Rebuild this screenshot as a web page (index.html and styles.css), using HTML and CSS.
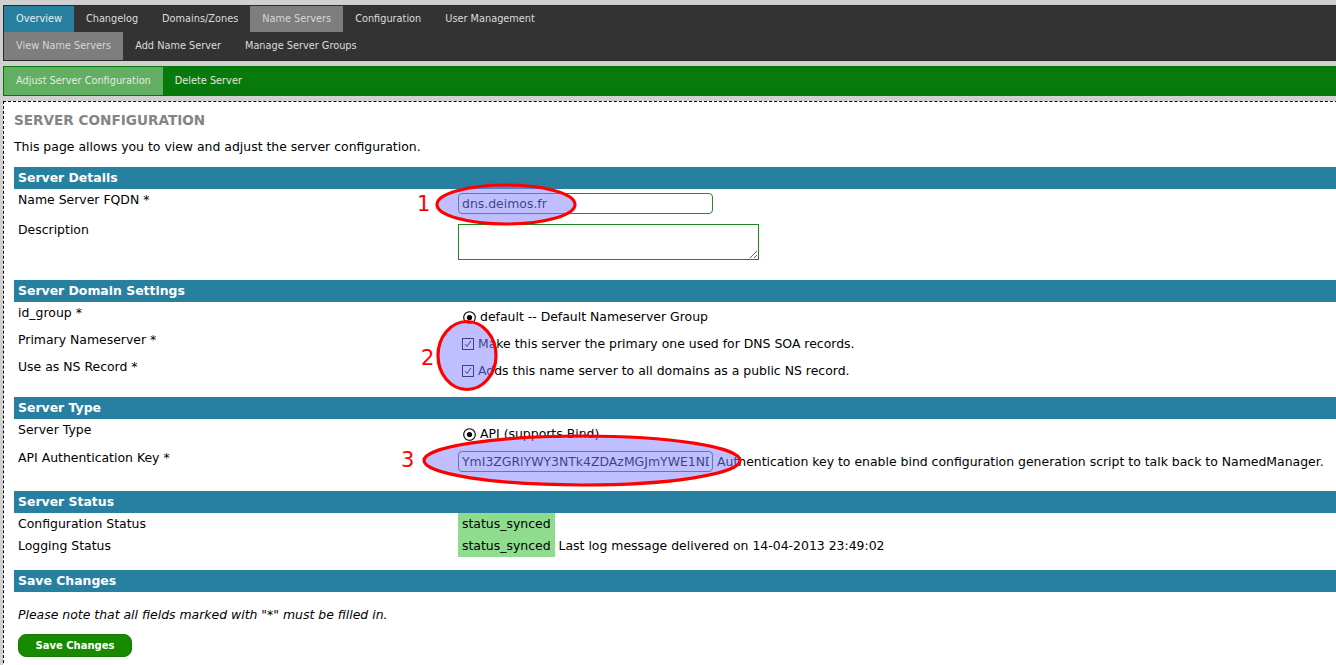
FILE: index.html
```html
<!DOCTYPE html>
<html>
<head>
<meta charset="utf-8">
<title>NamedManager - Server Configuration</title>
<link rel="stylesheet" href="styles.css">
</head>
<body>
<nav class="topnav">
  <ul class="tabs">
    <li class="tab active">Overview</li>
    <li class="tab">Changelog</li>
    <li class="tab">Domains/Zones</li>
    <li class="tab sel">Name Servers</li>
    <li class="tab">Configuration</li>
    <li class="tab">User Management</li>
  </ul>
  <ul class="tabs sub">
    <li class="tab sel">View Name Servers</li>
    <li class="tab">Add Name Server</li>
    <li class="tab">Manage Server Groups</li>
  </ul>
</nav>
<div class="actionbar">
  <span class="act current">Adjust Server Configuration</span>
  <span class="act">Delete Server</span>
</div>
<main class="content">
  <h1 class="title">SERVER CONFIGURATION</h1>
  <p class="intro">This page allows you to view and adjust the server configuration.</p>

  <section class="form-section sec-details">
    <div class="sec-head">Server Details</div>
    <div class="row r-input">
      <div class="lbl">Name Server FQDN *</div>
      <div class="val"><input class="text" type="text" value="dns.deimos.fr"></div>
    </div>
    <div class="row r-area">
      <div class="lbl">Description</div>
      <div class="val"><textarea class="area"></textarea></div>
    </div>
  </section>

  <section class="form-section sec-domain">
    <div class="sec-head">Server Domain Settings</div>
    <div class="row r-opt">
      <div class="lbl">id_group *</div>
      <div class="val"><svg class="radio" width="13" height="13" viewBox="0 0 13 13"><circle cx="6.5" cy="6.5" r="5.8" fill="#fff" stroke="#000" stroke-width="1.1"/><circle cx="6.5" cy="6.5" r="2.6" fill="#000"/></svg><span>default -- Default Nameserver Group</span></div>
    </div>
    <div class="row r-opt">
      <div class="lbl">Primary Nameserver *</div>
      <div class="val"><svg class="check" width="12" height="12" viewBox="0 0 12 12"><rect x="0.5" y="0.5" width="11" height="11" fill="#fff" stroke="#000"/><polyline points="3,6.2 5,8.4 9,2.8" fill="none" stroke="#000" stroke-width="1"/></svg><span>Make this server the primary one used for DNS SOA records.</span></div>
    </div>
    <div class="row r-opt">
      <div class="lbl">Use as NS Record *</div>
      <div class="val"><svg class="check" width="12" height="12" viewBox="0 0 12 12"><rect x="0.5" y="0.5" width="11" height="11" fill="#fff" stroke="#000"/><polyline points="3,6.2 5,8.4 9,2.8" fill="none" stroke="#000" stroke-width="1"/></svg><span>Adds this name server to all domains as a public NS record.</span></div>
    </div>
  </section>

  <section class="form-section sec-type">
    <div class="sec-head">Server Type</div>
    <div class="row r-opt r-opt-tall">
      <div class="lbl">Server Type</div>
      <div class="val"><svg class="radio" width="13" height="13" viewBox="0 0 13 13"><circle cx="6.5" cy="6.5" r="5.8" fill="#fff" stroke="#000" stroke-width="1.1"/><circle cx="6.5" cy="6.5" r="2.6" fill="#000"/></svg><span>API (supports Bind)</span></div>
    </div>
    <div class="row r-input">
      <div class="lbl">API Authentication Key *</div>
      <div class="val val-key"><input class="text" type="text" value="YmI3ZGRlYWY3NTk4ZDAzMGJmYWE1NDBhOTdkNzE4YjU="><span class="help">Authentication key to enable bind configuration generation script to talk back to NamedManager.</span></div>
    </div>
  </section>

  <section class="form-section sec-status">
    <div class="sec-head">Server Status</div>
    <div class="row r-status">
      <div class="lbl">Configuration Status</div>
      <div class="val"><span class="status">status_synced</span></div>
    </div>
    <div class="row r-status">
      <div class="lbl">Logging Status</div>
      <div class="val"><span class="status">status_synced</span><span class="help">Last log message delivered on 14-04-2013 23:49:02</span></div>
    </div>
  </section>

  <section class="form-section sec-save">
    <div class="sec-head">Save Changes</div>
    <p class="note">Please note that all fields marked with "*" must be filled in.</p>
    <button class="btn" type="button">Save Changes</button>
  </section>
</main>

<svg class="annot" width="1336" height="665" viewBox="0 0 1336 665">
  <ellipse cx="506" cy="204.5" rx="69" ry="19.5" fill="rgba(128,128,255,0.5)" stroke="#ff0000" stroke-width="3.2"/>
  <ellipse cx="467" cy="355.5" rx="29" ry="34" fill="rgba(128,128,255,0.5)" stroke="#ff0000" stroke-width="3.2"/>
  <ellipse cx="582" cy="460.5" rx="158" ry="24.5" fill="rgba(128,128,255,0.5)" stroke="#ff0000" stroke-width="3.2"/>
  <text x="417" y="211" class="num">1</text>
  <text x="421" y="365" class="num">2</text>
  <text x="401" y="467" class="num">3</text>
</svg>
</body>
</html>
```
FILE: styles.css
```css
html {
  overflow: hidden;
  background: #d0d0d0;
}

body {
  margin: 5px 0 0 3px;
  width: 1400px;
  background: #d0d0d0;
  font-family: "DejaVu Sans", "Noto Sans", sans-serif;
  font-size: 12.45px;
  color: #000;
}

/* ---------- top navigation ---------- */
.topnav {
  background: #333333;
  border: 1px solid #2a2a2a;
}

.tabs {
  list-style: none;
  margin: 0;
  padding: 0;
  display: flex;
  height: 26px;
}

.tabs.sub {
  height: 28px;
}

.tab {
  padding: 0 12px;
  line-height: 26px;
  font-size: 9.75px;
  color: #dcdcdc;
  white-space: nowrap;
}

.tabs.sub .tab {
  line-height: 28px;
}

.tab.active {
  background: #2880a1;
  color: #ececec;
}

.tab.sel {
  background: #7e7e7e;
  color: #d6d6d6;
}

/* ---------- action bar ---------- */
.actionbar {
  margin-top: 5px;
  display: flex;
  height: 28px;
  background: #087a0b;
  border: 1px solid #077509;
}

.act {
  padding: 0 12px;
  line-height: 28px;
  font-size: 9.75px;
  color: #e6e6e6;
  white-space: nowrap;
}

.act.current {
  background: #62ae62;
  color: #e2ece2;
}

/* ---------- content ---------- */
.content {
  margin-top: 5px;
  background: #fff;
  border: 1px dashed #000;
  padding: 10px 10px 60px;
}

.title {
  margin: 0;
  font-size: 13.6px;
  line-height: 16px;
  font-weight: bold;
  color: #858585;
}

.intro {
  margin: 11px 0 12px;
  line-height: 16px;
}

.sec-head {
  height: 22px;
  line-height: 22px;
  padding-left: 4px;
  background: #2880a1;
  color: #fff;
  font-weight: bold;
}

.row {
  display: grid;
  grid-template-columns: 444px 1fr;
}

.lbl {
  padding: 3px 4px;
  line-height: 16px;
  height: 16px;
}

.val {
  line-height: 16px;
  white-space: nowrap;
  display: flex;
  align-items: center;
}

.sec-details {
  margin-bottom: 16px;
}

.sec-domain {
  margin-bottom: 14px;
}

.sec-type {
  margin-bottom: 14px;
}

.sec-status {
  margin-bottom: 13px;
}

.r-input .val {
  height: 21px;
  padding: 4px 0 5px;
}

.r-area .val {
  display: block;
  padding: 5px 0 4px;
}

.r-opt .val {
  height: 16px;
  padding: 7px 0 4px;
}

.r-opt-tall .val {
  padding-bottom: 5px;
}

.r-status .val {
  height: 22px;
}

.text {
  box-sizing: border-box;
  flex: none;
  width: 255px;
  height: 21px;
  margin: 0;
  padding: 0 3px;
  border: 1px solid #2f872f;
  border-radius: 4px;
  background: #fff;
  font-family: "DejaVu Sans", sans-serif;
  font-size: 12.45px;
  color: #000;
  outline: none;
}

.help {
  margin-left: 4px;
}

.area {
  display: block;
  box-sizing: border-box;
  width: 301px;
  height: 36px;
  margin: 0;
  border: 1px solid #1e881e;
  border-radius: 0;
  background: #fff;
  font-family: "DejaVu Sans", sans-serif;
  font-size: 12.45px;
}

.radio {
  margin: 0 4px 0 5px;
  flex: none;
}

.check {
  margin: 0 4px 0 4px;
  flex: none;
}

.status {
  display: block;
  padding: 3px 4px;
  line-height: 16px;
  background: #8fdc8f;
}

.note {
  margin: 15px 0 0;
  padding-left: 4px;
  line-height: 16px;
  font-style: italic;
}

.btn {
  display: block;
  margin: 11px 0 0 4px;
  width: 114px;
  height: 23px;
  padding: 0;
  border: 1px solid #127c00;
  border-radius: 8px;
  background: #178a00;
  color: #fff;
  font-family: "DejaVu Sans", sans-serif;
  font-size: 10px;
  font-weight: bold;
}

/* ---------- annotation overlay ---------- */
.annot {
  position: absolute;
  top: 0;
  left: 0;
  pointer-events: none;
}

.num {
  font-family: "DejaVu Sans", sans-serif;
  font-size: 21px;
  fill: #ff0000;
}
```
